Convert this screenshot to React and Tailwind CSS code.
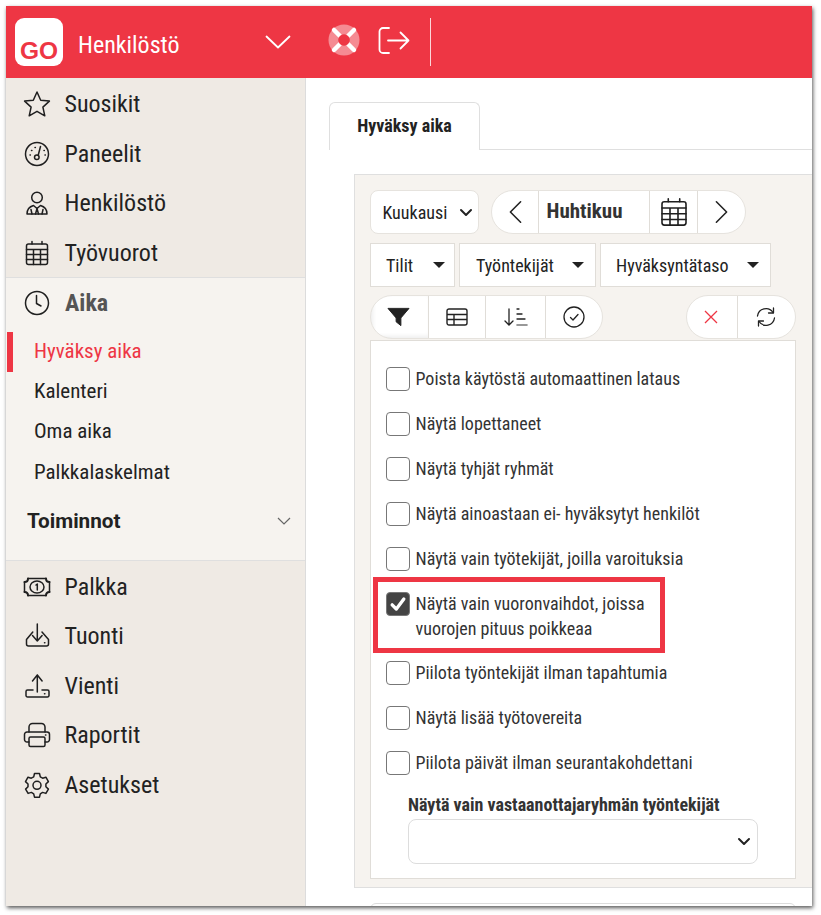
import React from "react";

const Ic = ({ children, className = "w-[28px] h-[28px]", sw = 1.5 }) => (
  <svg viewBox="0 0 28 28" fill="none" stroke="#1f1f1f" strokeWidth={sw} strokeLinecap="round" strokeLinejoin="round" className={className}>
    {children}
  </svg>
);

const icons = {
  star: <path d="M14 2l3.700 8.200 8.700.9-6.500 6 1.900 8.700L14 21.300l-7.800 4.500 1.900-8.700-6.500-6 8.700-.9z" />,
  gauge: (
    <>
      <circle cx="14" cy="14" r="11.500" />
      <path d="M17.500 6.500l-2.300 8.700" />
      <circle cx="13.800" cy="17.300" r="2.300" />
      <path d="M7 15h.4M8.500 10.500h.4M12 7.500h.4M21 10.500h.3M22 15h.3" />
    </>
  ),
  person: (
    <>
      <circle cx="14" cy="8.500" r="5.300" />
      <path d="M4 25c0-4.300 2-7.200 6.500-8.500l3.500 3 3.500-3c4.500 1.300 6.500 4.200 6.500 8.500z" />
      <path d="M14 19.500l-1.500 5.500M14 19.500l1.500 5.500M8 20.500l1 4.500M20 20.500l-1 4.500" />
    </>
  ),
  cal: (
    <>
      <rect x="3.500" y="5" width="21" height="20.500" rx="2" />
      <path d="M3.500 10.500h21M3.500 15.500h21M3.500 20.500h21M10.500 10.500v15M17.500 10.500v15M9 2.500V5M19 2.500V5" />
    </>
  ),
  clock: (
    <>
      <circle cx="14" cy="14" r="11.500" />
      <path d="M13.500 6.500V14.500l4.500 2.500" />
    </>
  ),
  money: (
    <>
      <path d="M5 5.500h18M5 22.500h18M1.500 9v10M26.500 9v10" />
      <path d="M5 5.500c0 2-1.500 3.500-3.500 3.500M23 5.500c0 2 1.500 3.500 3.500 3.500M5 22.500c0-2-1.500-3.500-3.500-3.500M23 22.500c0-2 1.500-3.500 3.500-3.500" strokeWidth="2" />
      <ellipse cx="14" cy="14" rx="7" ry="6" />
      <path d="M13 12l1.300-1v6" />
    </>
  ),
  down: (
    <>
      <path d="M14.300 2v17M9.500 13.500l4.800 5.500 4.800-5.500" />
      <path d="M9.800 10L3.500 17.500V22a2 2 0 002 2h18a2 2 0 002-2v-4.500L19 10" />
      <path d="M21.500 20.800h.4" />
    </>
  ),
  up: (
    <>
      <path d="M14.300 20V3M9.500 9l4.800-6 4.800 6" />
      <path d="M10 18H4.500a1.500 1.500 0 00-1.500 1.500v4A1.500 1.500 0 004.500 25h20a1.500 1.500 0 001.500-1.500v-4a1.500 1.500 0 00-1.500-1.500H19" />
      <path d="M21.500 21.800h.4" />
    </>
  ),
  print: (
    <>
      <path d="M6 11V6a3.500 3.500 0 013.500-3.500h9A3.500 3.500 0 0122 6v5" />
      <path d="M6 21H4a2.500 2.500 0 01-2.500-2.500v-5A2.500 2.500 0 014 11h20a2.500 2.500 0 012.500 2.500v5A2.500 2.500 0 0124 21h-2" />
      <rect x="6" y="16" width="16" height="9.500" rx="1.500" />
      <path d="M22.500 14h.4" />
    </>
  ),
  gear: (
    <>
      <path d="M11.500 2.500h5l.8 3.400 2.300 1.300 3.300-1 2.500 4.400-2.500 2.400v2.700l2.500 2.400-2.500 4.300-3.300-1-2.300 1.400-.8 3.400h-5l-.8-3.400-2.300-1.400-3.300 1-2.500-4.300L5 15.700V13L2.500 10.600 5 6.200l3.300 1 2.400-1.300z" />
      <circle cx="14" cy="14.300" r="4" />
    </>
  ),
};

const font = "font-['Roboto','Liberation_Sans',sans-serif] font-stretch-[75%]";

const NavRow = ({ icon, label }) => (
  <div className="h-[49.5px] flex items-center pl-[17px]">
    <span className="w-[28px] flex justify-center">
      <Ic>{icons[icon]}</Ic>
    </span>
    <span className="ml-[14px] -translate-x-[0.5px] text-[24px] text-[#222]">{label}</span>
  </div>
);

const SubRow = ({ label, active }) => (
  <div className={`h-[40.300px] flex items-center pl-[28px] text-[21px] relative ${active ? "text-[#ee3644]" : "text-[#222]"}`}>
    {active && <span className="absolute left-[1px] top-0 bottom-0 w-[6px] bg-[#ee3644]" />}
    {label}
  </div>
);

const Caret = () => (
  <span className="w-0 h-0 border-l-[6px] border-r-[6px] border-t-[6px] border-l-transparent border-r-transparent border-t-[#222]" />
);

const Chevron = ({ className = "" }) => (
  <svg viewBox="0 0 14 9" className={className} fill="none" stroke="#222" strokeWidth="2" strokeLinecap="round" strokeLinejoin="round">
    <path d="M2 2l5 5 5-5" />
  </svg>
);

const Dd = ({ label, w }) => (
  <div className={`h-[44px] bg-white border border-[#e0ddd8] flex items-center justify-between text-[18px] text-[#222] ${w}`}>
    {label}
    <Caret />
  </div>
);

const Check = ({ label, checked }) => (
  <div className="flex items-start min-h-[45px]">
    <span className={`w-[24px] h-[24px] shrink-0 rounded-[4px] border-[1.500px] border-[#777] flex items-center justify-center ${checked ? "bg-[#444] border-[#444]" : "bg-white"}`}>
      {checked && (
        <svg viewBox="0 0 24 24" className="w-[20px] h-[20px]" fill="none" stroke="white" strokeWidth="4" strokeLinecap="round" strokeLinejoin="round">
          <path d="M5 13l5 5 9-12" />
        </svg>
      )}
    </span>
    <span className="ml-[5.500px] -mt-[1px] text-[18px] leading-[25px] text-[#333] whitespace-pre">{label}</span>
  </div>
);

const Seg = ({ w, children, last, className = "" }) => (
  <div className={`h-full flex items-center justify-center ${w} ${last ? "" : "border-r border-[#e0ddd8]"} ${className}`}>{children}</div>
);

export default function App() {
  return (
    <div className={`w-[821px] h-[915px] bg-white pl-[6px] pt-[6px] overflow-hidden ${font}`}>
      <div className="w-[806px] h-[900px] bg-white shadow-[1px_2px_4px_rgba(0,0,0,0.65)] flex flex-col overflow-hidden">
        <header className="h-[72px] shrink-0 bg-[#ee3644] flex items-center text-white">
          <div className="ml-[9px] w-[48px] h-[48px] rounded-[9px] bg-white flex items-end justify-center pb-[2px] text-[#ee3644] text-[24.500px] leading-[26px] font-bold font-stretch-[100%] font-['Liberation_Sans',sans-serif]">GO</div>
          <span className="ml-[15px] mt-[5px] text-[24px] w-[187px]">Henkilöstö</span>
          <svg viewBox="0 0 26 14" className="w-[26px] h-[14px]" fill="none" stroke="white" strokeWidth="1.800" strokeLinecap="round" strokeLinejoin="round">
            <path d="M1.500 1.500L13 12.500 24.500 1.500" />
          </svg>
          <svg viewBox="0 0 32 32" className="ml-[37px] w-[32px] h-[32px] -mt-[4px]">
            <circle cx="16" cy="16" r="15.500" fill="#f58b93" />
            <path d="M6 6l6 6M26 6l-6 6M6 26l6-6M26 26l-6-6" stroke="white" strokeWidth="4.500" strokeLinecap="round" />
            <circle cx="16" cy="16" r="5.800" fill="#ee3644" />
          </svg>
          <svg viewBox="0 0 32 27" className="ml-[18px] w-[32px] h-[27px] -mt-[4px]" fill="none" stroke="white" strokeWidth="1.800" strokeLinecap="round" strokeLinejoin="round">
            <path d="M11 1H5a3.500 3.500 0 00-3.500 3.500v18A3.500 3.500 0 005 26h6" />
            <path d="M10 13.500h20.500M22.500 5.500l8 8-8 8" />
          </svg>
          <span className="ml-[20px] w-px h-[48px] bg-white/80" />
        </header>

        <div className="flex-1 flex min-h-0">
          <aside className="w-[300px] shrink-0 bg-[#efeae4] border-r border-[#dcdcdc] pt-[1.500px]">
            <NavRow icon="star" label="Suosikit" />
            <NavRow icon="gauge" label="Paneelit" />
            <NavRow icon="person" label="Henkilöstö" />
            <NavRow icon="cal" label="Työvuorot" />
            <div className="h-[284px] -mt-[0.500px] bg-[#f6f3ef] border-y border-[#dfdfdf]">
              <div className="h-[50px] flex items-center pl-[17px]">
                <span className="w-[28px] flex justify-center"><Ic>{icons.clock}</Ic></span>
                <span className="ml-[14px] text-[24px] font-bold text-[#555]">Aika</span>
              </div>
              <div className="pt-[3.500px]">
                <SubRow label="Hyväksy aika" active />
                <SubRow label="Kalenteri" />
                <SubRow label="Oma aika" />
                <SubRow label="Palkkalaskelmat" />
              </div>
              <div className="mt-[8.500px] h-[40px] flex items-center justify-between pl-[21px] pr-[14px]">
                <span className="text-[20.700px] font-bold text-[#222] font-stretch-[100%]">Toiminnot</span>
                <svg viewBox="0 0 14 8" className="w-[14px] h-[8px]" fill="none" stroke="#666" strokeWidth="1.200"><path d="M1 1l6 6 6-6" /></svg>
              </div>
            </div>
            <div className="pt-[1px]">
              <NavRow icon="money" label="Palkka" />
              <NavRow icon="down" label="Tuonti" />
              <NavRow icon="up" label="Vienti" />
              <NavRow icon="print" label="Raportit" />
              <NavRow icon="gear" label="Asetukset" />
            </div>
          </aside>

          <main className="flex-1 min-w-0 bg-white pt-[24px]">
            <div className="flex h-[48px] pl-[23px]">
              <div className="w-[151px] h-[48px] border border-b-0 border-[#dfdfdf] rounded-t-[6px] bg-white flex items-center justify-center text-[18px] font-bold text-[#222] pb-[3px]">Hyväksy aika</div>
              <div className="flex-1 border-b border-[#dfdfdf]" />
            </div>
            <div className="mt-[24px] ml-[48px] h-[714px] bg-[#f6f3ef] border-t border-l border-[#dfdfdf] pl-[15px] pt-[15px]">
              <div className="flex gap-[12px] h-[45px]">
                <div className="w-[109px] h-[44px] bg-white border border-[#e6e3de] rounded-[8px] flex items-center justify-between pl-[11.500px] pr-[5px] text-[18px] text-[#222]">
                  Kuukausi
                  <Chevron className="w-[14px] h-[9px]" />
                </div>
                <div className="h-[44px] bg-white border border-[#e6e3de] rounded-[22px] flex items-center overflow-hidden">
                  <Seg w="w-[47px]">
                    <svg viewBox="0 0 14 24" className="w-[13px] h-[24px]" fill="none" stroke="#222" strokeWidth="1.700" strokeLinecap="round" strokeLinejoin="round"><path d="M12.500 1L1.500 12l11 11" /></svg>
                  </Seg>
                  <Seg w="w-[111px]" className="pr-[19px] text-[21px] font-bold text-[#333]">Huhtikuu</Seg>
                  <Seg w="w-[48px]"><Ic className="w-[32px] h-[32px]" sw={1.4}>{icons.cal}</Ic></Seg>
                  <Seg w="w-[47px]" last>
                    <svg viewBox="0 0 14 24" className="w-[13px] h-[24px]" fill="none" stroke="#222" strokeWidth="1.700" strokeLinecap="round" strokeLinejoin="round"><path d="M1.500 1l11 11-11 11" /></svg>
                  </Seg>
                </div>
              </div>
              <div className="flex gap-[4px] mt-[8px]">
                <Dd label="Tilit" w="w-[85px] pl-[15px] pr-[9px]" />
                <Dd label="Työntekijät" w="w-[137px] pl-[16px] pr-[11px]" />
                <Dd label="Hyväksyntätaso" w="w-[171px] pl-[15px] pr-[11px]" />
              </div>
              <div className="flex justify-between mt-[8px] w-[426px] h-[45px]">
                <div className="h-[44px] bg-white border border-[#e6e3de] rounded-[22px] flex items-center overflow-hidden">
                  <Seg w="w-[58px]" className="pr-[2px] shadow-[inset_2px_-2px_4px_rgba(0,0,0,0.07)]">
                    <svg viewBox="0 0 24 20" className="w-[23px] h-[20px]" fill="#222"><path d="M1 1h22l-8.500 10v8l-5-4v-4z" stroke="#222" strokeWidth="1" strokeLinejoin="round" /></svg>
                  </Seg>
                  <Seg w="w-[57px]">
                    <svg viewBox="0 0 22 18" className="w-[22px] h-[18px]" fill="none" stroke="#222" strokeWidth="1.400"><rect x="1" y="1" width="20" height="16" rx="2" /><path d="M1 6.500h20M1 11.500h20M8 6.500v10.500" /></svg>
                  </Seg>
                  <Seg w="w-[60px]">
                    <svg viewBox="0 0 24 20" className="w-[24px] h-[20px]" fill="none" stroke="#222" strokeWidth="1.300" strokeLinecap="round"><path d="M5 2v16M1 14l4 4 4-4M13 2h2M13 7h5M13 12h8" /><path d="M13 18h10" stroke="#777" strokeWidth="1.600" /></svg>
                  </Seg>
                  <Seg w="w-[56px]" last>
                    <svg viewBox="0 0 22 22" className="w-[22px] h-[22px]" fill="none" stroke="#222" strokeWidth="1.300" strokeLinecap="round" strokeLinejoin="round"><circle cx="11" cy="11" r="10" /><path d="M7.500 11.500l2.500 2.500 5-5.500" /></svg>
                  </Seg>
                </div>
                <div className="h-[44px] bg-white border border-[#e6e3de] rounded-[22px] flex items-center overflow-hidden">
                  <Seg w="w-[51px]" className="pr-[2px]">
                    <svg viewBox="0 0 14 14" className="w-[14px] h-[14px]" fill="none" stroke="#ee3644" strokeWidth="1.300"><path d="M1 1l12 12M13 1L1 13" /></svg>
                  </Seg>
                  <Seg w="w-[57px]" last className="pr-[1px]">
                    <svg viewBox="0 0 20 20" className="w-[20px] h-[20px]" fill="none" stroke="#222" strokeWidth="1.300" strokeLinecap="round" strokeLinejoin="round"><path d="M1.500 9A8.500 8.500 0 0117 5.500M18.500 11A8.500 8.500 0 013 14.500" /><path d="M17.500 1v5h-5M2.500 19v-5h5" /></svg>
                  </Seg>
                </div>
              </div>
              <div className="relative w-[426px] h-[539px] bg-white border border-[#e0ddd8] pl-[15px] pt-[26px]">
                <Check label="Poista käytöstä automaattinen lataus" />
                <Check label="Näytä lopettaneet" />
                <Check label="Näytä tyhjät ryhmät" />
                <Check label="Näytä ainoastaan ei- hyväksytyt henkilöt" />
                <Check label="Näytä vain työtekijät, joilla varoituksia" />
                <div className="h-[69px]"><Check checked label={"Näytä vain vuoronvaihdot, joissa\nvuorojen pituus poikkeaa"} /></div>
                <Check label="Piilota työntekijät ilman tapahtumia" />
                <Check label="Näytä lisää työtovereita" />
                <Check label="Piilota päivät ilman seurantakohdettani" />
                <div className="ml-[22px] -mt-[4px] text-[18px] leading-[25px] font-bold text-[#333]">Näytä vain vastaanottajaryhmän työntekijät</div>
                <div className="ml-[22px] mt-[2px] w-[350px] h-[45px] border border-[#ddd] rounded-[8px] flex items-center justify-end pr-[6px]">
                  <Chevron className="w-[14px] h-[9px]" />
                </div>
                <div className="absolute left-[2px] top-[236px] w-[292px] h-[76px] border-[5px] border-[#ee3644]" />
              </div>
              <div className="-ml-[15px] mt-[8px] h-[16px] bg-white border-t border-[#dfdfdf] pl-[15px] pt-[15px]">
                <div className="w-[426px] h-[10px] border border-[#ddd] rounded-t-[6px]" />
              </div>
            </div>
          </main>
        </div>
      </div>
    </div>
  );
}
